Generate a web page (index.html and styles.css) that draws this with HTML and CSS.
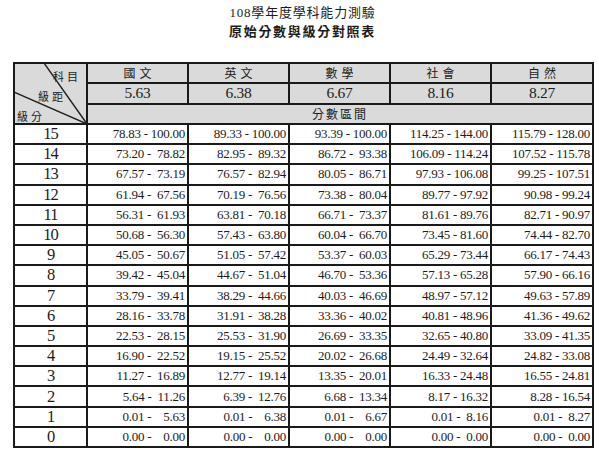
FILE: index.html
```html
<!DOCTYPE html>
<html lang="zh-Hant">
<head>
<meta charset="utf-8">
<title>108學年度學科能力測驗 原始分數與級分對照表</title>
<link rel="stylesheet" href="styles.css">
</head>
<body>
<div class="title">
  <div class="t1">108學年度學科能力測驗</div>
  <div class="t2">原始分數與級分對照表</div>
</div>
<table class="grid">
  <colgroup>
    <col class="c0"><col class="cs"><col class="cs"><col class="cs"><col class="cs"><col class="cl">
  </colgroup>
  <tr class="hrow">
    <td class="hd diag" rowspan="3"><div class="diagbox"><svg class="diaglines" viewBox="0 0 73 61" preserveAspectRatio="none"><line x1="30" y1="0" x2="73" y2="61"/><line x1="0" y1="29" x2="73" y2="61"/></svg><div class="lb lb1">科目</div><div class="lb lb2">級距</div><div class="lb lb3">級分</div></div></td>
    <td class="hd subj">國文</td><td class="hd subj">英文</td><td class="hd subj">數學</td><td class="hd subj">社會</td><td class="hd subj">自然</td>
  </tr>
  <tr class="hrow">
    <td class="hd val">5.63</td><td class="hd val">6.38</td><td class="hd val">6.67</td><td class="hd val">8.16</td><td class="hd val">8.27</td>
  </tr>
  <tr class="hrow">
    <td class="hd range" colspan="5">分數區間</td>
  </tr>
  <tr><td class="lv">15</td><td class="n">78.83 - 100.00</td><td class="n">89.33 - 100.00</td><td class="n">93.39 - 100.00</td><td class="n">114.25 - 144.00</td><td class="n">115.79 - 128.00</td></tr>
  <tr><td class="lv">14</td><td class="n">73.20 -  78.82</td><td class="n">82.95 -  89.32</td><td class="n">86.72 -  93.38</td><td class="n">106.09 - 114.24</td><td class="n">107.52 - 115.78</td></tr>
  <tr><td class="lv">13</td><td class="n">67.57 -  73.19</td><td class="n">76.57 -  82.94</td><td class="n">80.05 -  86.71</td><td class="n">97.93 - 106.08</td><td class="n">99.25 - 107.51</td></tr>
  <tr><td class="lv">12</td><td class="n">61.94 -  67.56</td><td class="n">70.19 -  76.56</td><td class="n">73.38 -  80.04</td><td class="n">89.77 - 97.92</td><td class="n">90.98 - 99.24</td></tr>
  <tr><td class="lv">11</td><td class="n">56.31 -  61.93</td><td class="n">63.81 -  70.18</td><td class="n">66.71 -  73.37</td><td class="n">81.61 - 89.76</td><td class="n">82.71 - 90.97</td></tr>
  <tr><td class="lv">10</td><td class="n">50.68 -  56.30</td><td class="n">57.43 -  63.80</td><td class="n">60.04 -  66.70</td><td class="n">73.45 - 81.60</td><td class="n">74.44 - 82.70</td></tr>
  <tr><td class="lv">9</td><td class="n">45.05 -  50.67</td><td class="n">51.05 -  57.42</td><td class="n">53.37 -  60.03</td><td class="n">65.29 - 73.44</td><td class="n">66.17 - 74.43</td></tr>
  <tr><td class="lv">8</td><td class="n">39.42 -  45.04</td><td class="n">44.67 -  51.04</td><td class="n">46.70 -  53.36</td><td class="n">57.13 - 65.28</td><td class="n">57.90 - 66.16</td></tr>
  <tr><td class="lv">7</td><td class="n">33.79 -  39.41</td><td class="n">38.29 -  44.66</td><td class="n">40.03 -  46.69</td><td class="n">48.97 - 57.12</td><td class="n">49.63 - 57.89</td></tr>
  <tr><td class="lv">6</td><td class="n">28.16 -  33.78</td><td class="n">31.91 -  38.28</td><td class="n">33.36 -  40.02</td><td class="n">40.81 - 48.96</td><td class="n">41.36 - 49.62</td></tr>
  <tr><td class="lv">5</td><td class="n">22.53 -  28.15</td><td class="n">25.53 -  31.90</td><td class="n">26.69 -  33.35</td><td class="n">32.65 - 40.80</td><td class="n">33.09 - 41.35</td></tr>
  <tr><td class="lv">4</td><td class="n">16.90 -  22.52</td><td class="n">19.15 -  25.52</td><td class="n">20.02 -  26.68</td><td class="n">24.49 - 32.64</td><td class="n">24.82 - 33.08</td></tr>
  <tr><td class="lv">3</td><td class="n">11.27 -  16.89</td><td class="n">12.77 -  19.14</td><td class="n">13.35 -  20.01</td><td class="n">16.33 - 24.48</td><td class="n">16.55 - 24.81</td></tr>
  <tr><td class="lv">2</td><td class="n">5.64 -  11.26</td><td class="n">6.39 -  12.76</td><td class="n">6.68 -  13.34</td><td class="n">8.17 - 16.32</td><td class="n">8.28 - 16.54</td></tr>
  <tr><td class="lv">1</td><td class="n">0.01 -    5.63</td><td class="n">0.01 -    6.38</td><td class="n">0.01 -    6.67</td><td class="n">0.01 -  8.16</td><td class="n">0.01 -  8.27</td></tr>
  <tr><td class="lv">0</td><td class="n">0.00 -    0.00</td><td class="n">0.00 -    0.00</td><td class="n">0.00 -    0.00</td><td class="n">0.00 -  0.00</td><td class="n">0.00 -  0.00</td></tr>
</table>
</body>
</html>
```

FILE: styles.css
```css
html, body {
  margin: 0;
  padding: 0;
  background: #ffffff;
}

body {
  color: #1c1c1c;
  font-family: "Liberation Serif", "Noto Sans CJK TC", serif;
}

.title {
  text-align: center;
  padding-top: 4px;
  padding-left: 6px;
}

.t1 {
  font-size: 13px;
  line-height: 18px;
  letter-spacing: 0.8px;
}

.t2 {
  font-size: 13px;
  line-height: 20px;
  font-weight: bold;
  letter-spacing: 1.7px;
}

.grid {
  margin-top: 20px;
  margin-left: 13px;
  width: 580px;
  table-layout: fixed;
  border-collapse: collapse;
  border: 2px solid #1a1a1a;
}

.c0 { width: 73px; }
.cs { width: 101px; }
.cl { width: 102px; }

.grid td {
  border: 2px solid #1a1a1a;
  height: 18.2px;
  padding: 0;
  line-height: 16px;
  overflow: hidden;
}

.hd {
  background: #dadada;
}

.subj {
  text-align: center;
  font-family: "Noto Sans CJK TC", sans-serif;
  font-size: 12px;
  letter-spacing: 4px;
  padding-left: 4px !important;
}

.val {
  text-align: center;
  font-size: 15.5px;
  letter-spacing: -0.3px;
}

.range {
  text-align: center;
  font-family: "Noto Sans CJK TC", sans-serif;
  font-size: 12px;
  letter-spacing: 2px;
}

.lv {
  text-align: center;
  font-size: 16.5px;
  letter-spacing: -1px;
}

.n {
  text-align: right;
  white-space: pre;
  font-size: 13px;
  letter-spacing: -0.25px;
  padding-right: 2px !important;
}

.grid td.diag {
  vertical-align: top;
  height: auto;
}

.diagbox {
  position: relative;
  box-sizing: border-box;
  height: 59px;
  padding: 5px 0 0;
  display: flex;
  flex-direction: column;
  justify-content: space-between;
  font-family: "Noto Sans CJK TC", sans-serif;
  font-size: 11px;
  letter-spacing: 3px;
}

.diaglines {
  position: absolute;
  left: -1px;
  top: -1px;
  width: calc(100% + 2px);
  height: calc(100% + 2px);
}

.diaglines line {
  stroke: #1e1e1e;
  stroke-width: 1.4;
  vector-effect: non-scaling-stroke;
}

.lb {
  line-height: 14px;
}

.lb1 {
  text-align: right;
  padding-right: 5px;
}

.lb2 {
  padding-left: 23px;
}

.lb3 {
  padding-left: 2px;
}
```
